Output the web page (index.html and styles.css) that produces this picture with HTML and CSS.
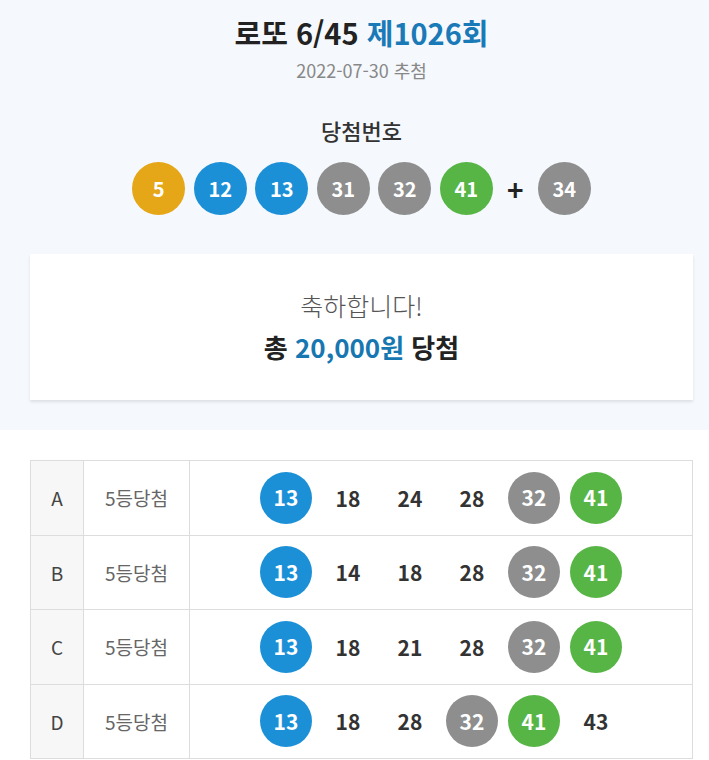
FILE: index.html
```html
<!DOCTYPE html>
<html lang="ko">
<head>
  <meta charset="UTF-8">
  <meta name="viewport" content="width=device-width, initial-scale=1.0">
  <title>로또 6/45 제1026회</title>
  <link rel="stylesheet" href="styles.css">
</head>
<body>

  <!-- Draw summary -->
  <div class="draw">
    <h1 class="draw-title">로또 6/45 <span class="round">제1026회</span></h1>
    <p class="draw-date">2022-07-30 추첨</p>
    <h2 class="draw-label">당첨번호</h2>
    <div class="balls">
      <span class="ball yellow">5</span>
      <span class="ball blue">12</span>
      <span class="ball blue">13</span>
      <span class="ball gray">31</span>
      <span class="ball gray">32</span>
      <span class="ball green">41</span>
      <span class="plus">+</span>
      <span class="ball gray">34</span>
    </div>

    <div class="result-card">
      <p class="congrats">축하합니다!</p>
      <p class="total">총 <span class="amount">20,000원</span> 당첨</p>
    </div>
  </div>

  <!-- My tickets -->
  <table class="tickets">
    <tr>
      <td class="slot">A</td>
      <td class="rank">5등당첨</td>
      <td class="nums">
        <div class="num-row">
          <span class="ball blue">13</span>
          <span class="num">18</span>
          <span class="num">24</span>
          <span class="num">28</span>
          <span class="ball gray">32</span>
          <span class="ball green">41</span>
        </div>
      </td>
    </tr>
    <tr>
      <td class="slot">B</td>
      <td class="rank">5등당첨</td>
      <td class="nums">
        <div class="num-row">
          <span class="ball blue">13</span>
          <span class="num">14</span>
          <span class="num">18</span>
          <span class="num">28</span>
          <span class="ball gray">32</span>
          <span class="ball green">41</span>
        </div>
      </td>
    </tr>
    <tr>
      <td class="slot">C</td>
      <td class="rank">5등당첨</td>
      <td class="nums">
        <div class="num-row">
          <span class="ball blue">13</span>
          <span class="num">18</span>
          <span class="num">21</span>
          <span class="num">28</span>
          <span class="ball gray">32</span>
          <span class="ball green">41</span>
        </div>
      </td>
    </tr>
    <tr>
      <td class="slot">D</td>
      <td class="rank">5등당첨</td>
      <td class="nums">
        <div class="num-row">
          <span class="ball blue">13</span>
          <span class="num">18</span>
          <span class="num">28</span>
          <span class="ball gray">32</span>
          <span class="ball green">41</span>
          <span class="num">43</span>
        </div>
      </td>
    </tr>
  </table>

</body>
</html>
```

FILE: styles.css
```css
/* Reset & base */
* {
  margin: 0;
  padding: 0;
  box-sizing: border-box;
}

body {
  font-family: 'Noto Sans CJK KR', 'Noto Sans', sans-serif;
  background: #fff;
  color: #222;
}

/* Draw summary */
.draw {
  background: #f5f8fc;
  padding: 12px 16px 30px 30px;
  text-align: center;
}

.draw-title {
  font-size: 29px;
  line-height: 40px;
  font-weight: 700;
  color: #222;
}

.draw-title .round {
  color: #1a7ab8;
}

.draw-date {
  margin-top: 6px;
  font-size: 18px;
  line-height: 24px;
  color: #888;
}

.draw-label {
  margin-top: 33px;
  font-size: 22px;
  line-height: 30px;
  font-weight: 500;
  color: #333;
}

.balls {
  margin-top: 17px;
  display: flex;
  justify-content: center;
  align-items: center;
  gap: 8.5px;
}

.ball {
  width: 53px;
  height: 53px;
  border-radius: 50%;
  display: inline-flex;
  align-items: center;
  justify-content: center;
  color: #fff;
  font-size: 20px;
  font-weight: 700;
  line-height: 1;
}

.ball.yellow { background: #e5a718; }
.ball.blue { background: #1c90d7; }
.ball.gray { background: #8e8e8e; }
.ball.green { background: #56b545; }

.plus {
  width: 28px;
  text-align: center;
  font-size: 28px;
  font-weight: 700;
  color: #222;
  line-height: 1;
}

.result-card {
  margin-top: 39px;
  background: #fff;
  padding: 35px 0;
  box-shadow: 0 2px 3px rgba(0, 0, 0, 0.1);
}

.congrats {
  font-size: 25px;
  line-height: 32px;
  font-weight: 300;
  color: #555;
}

.total {
  margin-top: 8px;
  font-size: 26px;
  line-height: 36px;
  font-weight: 700;
  color: #222;
}

.total .amount {
  color: #1677b1;
}

/* Tickets */
.tickets {
  margin: 30px 16px 0 30px;
  width: 663px;
  border-collapse: collapse;
  border: 1px solid #ddd;
}

.tickets td {
  border: 1px solid #ddd;
  height: 74.5px;
  text-align: center;
  vertical-align: middle;
}

.tickets .slot {
  width: 53px;
  background: #f7f7f7;
  font-size: 19px;
  color: #444;
}

.tickets .rank {
  width: 106px;
  font-size: 19px;
  color: #666;
}

.num-row {
  display: flex;
  justify-content: center;
  align-items: center;
  gap: 10px;
}

.num-row .ball {
  width: 52px;
  height: 52px;
  font-size: 21px;
}

.num {
  width: 52px;
  text-align: center;
  font-size: 21px;
  font-weight: 700;
  color: #333;
}
```
